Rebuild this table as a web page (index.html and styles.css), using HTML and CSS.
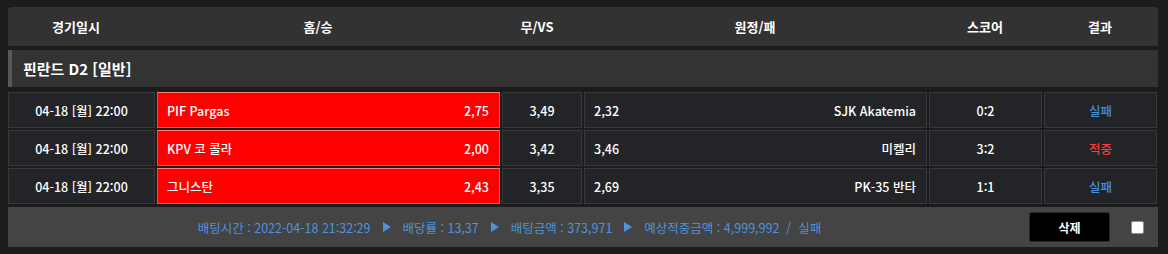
FILE: index.html
```html
<!DOCTYPE html>
<html lang="ko">
<head>
<meta charset="utf-8">
<title>Bet history</title>
<link rel="stylesheet" href="styles.css">
</head>
<body>
<div class="panel">
  <div class="head">
    <div>경기일시</div>
    <div>홈/승</div>
    <div>무/VS</div>
    <div>원정/패</div>
    <div>스코어</div>
    <div>결과</div>
  </div>
  <div class="league">핀란드 D2 [일반]</div>
  <div class="rows">
    <div class="row">
      <div class="cell center">04-18 [월] 22:00</div>
      <div class="cell pick split"><span>PIF Pargas</span><span>2,75</span></div>
      <div class="cell center">3,49</div>
      <div class="cell split"><span>2,32</span><span>SJK Akatemia</span></div>
      <div class="cell center">0:2</div>
      <div class="cell center lose">실패</div>
    </div>
    <div class="row">
      <div class="cell center">04-18 [월] 22:00</div>
      <div class="cell pick split"><span>KPV 코 콜라</span><span>2,00</span></div>
      <div class="cell center">3,42</div>
      <div class="cell split"><span>3,46</span><span>미켈리</span></div>
      <div class="cell center">3:2</div>
      <div class="cell center win">적중</div>
    </div>
    <div class="row">
      <div class="cell center">04-18 [월] 22:00</div>
      <div class="cell pick split"><span>그니스탄</span><span>2,43</span></div>
      <div class="cell center">3,35</div>
      <div class="cell split"><span>2,69</span><span>PK-35 반타</span></div>
      <div class="cell center">1:1</div>
      <div class="cell center lose">실패</div>
    </div>
  </div>
  <div class="foot">
    <div class="info">
      <span>배팅시간 : 2022-04-18 21:32:29</span>
      <i class="tri"></i>
      <span>배당률 : 13,37</span>
      <i class="tri"></i>
      <span>배팅금액 : 373,971</span>
      <i class="tri"></i>
      <span>예상적중금액 : 4,999,992&nbsp;&nbsp;/&nbsp;&nbsp;실패</span>
    </div>
    <button class="del">삭제</button>
    <span class="check"></span>
  </div>
</div>
</body>
</html>
```

FILE: styles.css
```css
html, body {
  margin: 0;
  padding: 0;
  background: #1c1c1c;
}
body {
  font-family: "Noto Sans CJK KR", "Noto Sans", sans-serif;
  font-size: 12.5px;
  font-weight: 500;
  color: #ffffff;
}
.panel {
  width: 1150px;
  margin-left: 8px;
  padding-top: 7px;
}
.head {
  display: grid;
  grid-template-columns: 136px 348px 90px 346px 114px 116px;
  height: 39px;
  align-items: center;
  background: #323232;
  border-radius: 4px 4px 0 0;
  font-size: 13px;
  font-weight: 700;
  text-align: center;
}
.league {
  margin-top: 4px;
  height: 37px;
  display: flex;
  align-items: center;
  background: #333333;
  border-left: 4px solid #585858;
  padding-left: 11px;
  font-size: 15px;
  font-weight: 700;
}
.rows {
  margin-top: 5px;
  display: flex;
  flex-direction: column;
  gap: 2px;
}
.row {
  display: grid;
  grid-template-columns: 147px 343px 80px 343px 113px 113px;
  gap: 2px;
  height: 36px;
}
.cell {
  box-sizing: border-box;
  background: #232427;
  border: 1px solid #383838;
  display: flex;
  align-items: center;
}
.center {
  justify-content: center;
}
.split {
  justify-content: space-between;
  padding: 0 10px 0 9px;
}
.pick {
  background: #ff0000;
  border: 1px solid #ff4646;
  border-top-color: #ff7a7a;
}
.lose {
  color: #4a8fdd;
}
.win {
  color: #ff3b3b;
}
.foot {
  margin-top: 3px;
  height: 40px;
  background: #444444;
  display: flex;
  align-items: center;
}
.info {
  flex: 1;
  margin-right: 18px;
  display: flex;
  justify-content: center;
  align-items: center;
  color: #4d93dc;
  font-size: 12.5px;
  font-weight: 400;
}
.tri {
  width: 0;
  height: 0;
  border-left: 8px solid #4d93dc;
  border-top: 5px solid transparent;
  border-bottom: 5px solid transparent;
  margin: 0 12px;
}
.del {
  width: 81px;
  height: 30px;
  background: #000000;
  color: #ffffff;
  border: 1px solid #2a2a2a;
  border-radius: 2px;
  font-family: inherit;
  font-size: 12px;
  font-weight: 700;
  margin-right: 21px;
  padding: 0;
}
.check {
  box-sizing: border-box;
  width: 13px;
  height: 13px;
  background: #ffffff;
  border: 1px solid #8f8f8f;
  border-radius: 2px;
  margin-right: 14px;
}
```
